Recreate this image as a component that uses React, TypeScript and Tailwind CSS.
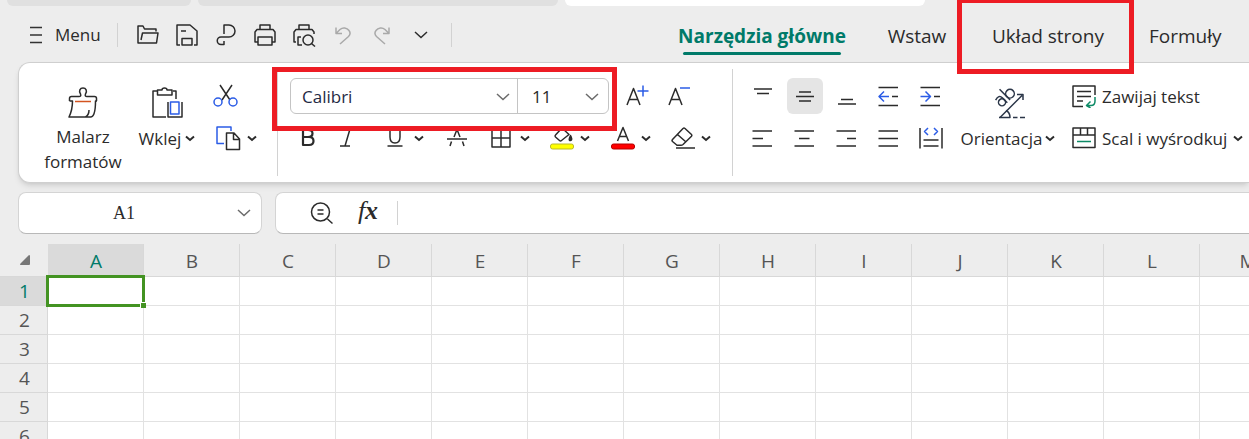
import type { ReactNode } from 'react';

const columns = ['A', 'B', 'C', 'D', 'E', 'F', 'G', 'H', 'I', 'J', 'K', 'L', 'M'];
const rows = [1, 2, 3, 4, 5, 6];

interface IconProps {
  children: ReactNode;
  size?: number;
  className?: string;
}

function Icon({ children, size = 24, className = '' }: IconProps) {
  return (
    <svg
      width={size}
      height={size}
      viewBox={`0 0 ${size} ${size}`}
      fill="none"
      stroke="currentColor"
      strokeWidth="1.5"
      strokeLinejoin="round"
      className={`shrink-0 ${className}`}
      aria-hidden="true"
    >
      {children}
    </svg>
  );
}

// Small bold arrow next to split buttons
function Caret() {
  return (
    <svg width="10" height="7" viewBox="0 0 10 7" fill="none" className="shrink-0" aria-hidden="true">
      <path d="M1 1.500l4 3.500 4-3.500" stroke="#2b2b2b" strokeWidth="2" />
    </svg>
  );
}

function Chevron({ className = '' }: { className?: string }) {
  return (
    <svg width="14" height="8" viewBox="0 0 14 8" fill="none" className={className} aria-hidden="true">
      <path d="M1 1l6 5.500L13 1" stroke="currentColor" strokeWidth="1.5" />
    </svg>
  );
}

interface ToolProps {
  label: string;
  children: ReactNode;
  className?: string;
}

function Tool({ label, children, className = 'w-9' }: ToolProps) {
  return (
    <button
      type="button"
      title={label}
      aria-label={label}
      className={`flex h-9 shrink-0 items-center justify-center rounded-md ${className}`}
    >
      {children}
    </button>
  );
}

function Divider({ className = '' }: { className?: string }) {
  return <div className={`w-px shrink-0 bg-[#d2d2d2] ${className}`} />;
}

function UndoIcon({ className = '' }: { className?: string }) {
  return (
    <Icon className={`text-[#a9a9a9] ${className}`}>
      <path d="M5 4.500v6h6M5 10.500l4-4a6 6 0 0 1 9 1c1.500 2 1 4.500-.5 6L9 21" />
    </Icon>
  );
}

function DocumentTabs() {
  return (
    <div className="flex h-1.5 shrink-0 gap-[7px] pl-[7px]">
      <div className="w-46 rounded-b-lg bg-[#e0e0e0]" />
      <div className="w-90 rounded-b-lg bg-[#e0e0e0]" />
      <div className="w-90 rounded-b-lg bg-white" />
    </div>
  );
}

function TopBar() {
  return (
    <header className="flex h-14 shrink-0 items-center pt-px">
      <button type="button" className="ml-[29px] flex w-[76px] items-center gap-3 text-[17px]">
        <svg width="14" height="18" viewBox="0 0 14 18" stroke="#333" strokeWidth="1.5" className="shrink-0" aria-hidden="true">
          <path d="M1 1.500h12M1 9h12M1 16.500h12" />
        </svg>
        Menu
      </button>
      <Divider className="ml-3 h-6" />
      <div className="ml-3 flex items-center gap-[3px]">
        <Tool label="Otwórz">
          <Icon>
            <path d="M20 8.500V6H8.500L7 3H2v17h18.500L22 10H6.500L5 17" />
          </Icon>
        </Tool>
        <Tool label="Zapisz">
          <Icon>
            <path d="M5 22H2V2h13l7 6v14h-3M7 22v-6.500h10V22zM6 8h5" />
          </Icon>
        </Tool>
        <Tool label="Eksportuj do PDF">
          <Icon>
            <path d="M10 11V2h5a6 6 0 0 1 0 12H7a3.700 3.700 0 0 0 0 7.500h3V18" />
          </Icon>
        </Tool>
        <Tool label="Drukuj">
          <Icon>
            <path d="M7 6.500V2h10v4.500M5 19H2V9l2-2.500h16L22 9v10h-3M5 14h14v8H5z" />
          </Icon>
        </Tool>
        <Tool label="Podgląd wydruku">
          <Icon>
            <path d="M7 6.500V2h10v4.500M4 19H2V9l2-2.500h16L22 9v2M9 14H6v8h4" />
            <circle cx="16" cy="17" r="5" />
            <path d="M19.500 20.500L23 23.500" />
          </Icon>
        </Tool>
        <Tool label="Cofnij">
          <UndoIcon />
        </Tool>
        <Tool label="Ponów">
          <UndoIcon className="-scale-x-100" />
        </Tool>
        <Tool label="Dostosuj pasek">
          <Chevron />
        </Tool>
      </div>
      <Divider className="ml-3 h-6" />
      <nav className="ml-[225px] flex items-center pt-[3px] text-[19px] whitespace-nowrap">
        <a href="#narzedzia" className="relative w-[170px] text-center font-bold text-[#007a69]">
          Narzędzia główne
          <span className="absolute inset-x-1.5 -bottom-[5px] h-[3px] rounded-full bg-[#007a69]" />
        </a>
        <a href="#wstaw" className="ml-10 w-[60px] text-center">
          Wstaw
        </a>
        <a href="#uklad" className="relative ml-[45px] w-[112px] text-center">
          Układ strony
          <span className="absolute -top-6 -right-[30px] -bottom-6 -left-[35px] z-10 border-5 border-[#ed1c24]" />
        </a>
        <a href="#formuly" className="ml-[45px] w-[72px] text-center">
          Formuły
        </a>
      </nav>
    </header>
  );
}

function ClipboardGroup() {
  return (
    <div className="flex pt-[15px] pl-5 text-[17px] leading-[25px]">
      <button type="button" className="flex w-22 flex-col items-center pt-2">
        <Icon size={34}>
          <path d="M3.500 15v-2.500q0-2 2-2H13q2.500 0 1.500-2.500c-2-3-.5-6 2.500-6s4.500 3 2.500 6q-1 2.500 1.500 2.500h7.500q2 0 2 2V15" />
          <path d="M3.500 15h3q0 9-3.500 16h21.500q5 0 5-16h1.500M23 24q0 5-3.500 7" />
          <path d="M9 15.500h16" stroke="#d35420" />
        </Icon>
        <span className="mt-1">Malarz</span>
        <span>formatów</span>
      </button>
      <button type="button" className="flex w-20 flex-col items-center pt-2">
        <Icon size={34}>
          <path d="M7 5H3v26h13M23 5h3v8M7.500 4h4.500q0-2 2.500-2t2.500 2h5v5h-14.500z" />
          <path d="M18 16v15h14V16" />
          <path d="M20.500 16h8.500v12h-8.500z" stroke="#2b5ce6" />
        </Icon>
        <span className="mt-1.5 flex items-center gap-1">
          Wklej
          <Caret />
        </span>
      </button>
      <div className="flex w-[58px] flex-col gap-1.5">
        <Tool label="Wytnij" className="w-[38px]">
          <Icon size={26}>
            <path d="M7 2l10 15M19 2L9 17" />
            <circle cx="5" cy="19" r="4" stroke="#2b5ce6" />
            <circle cx="20" cy="19" r="4" stroke="#2b5ce6" />
          </Icon>
        </Tool>
        <Tool label="Kopiuj" className="w-full gap-1.5">
          <Icon size={26}>
            <path d="M9 18.500H2V2h14v4" stroke="#2b5ce6" />
            <path d="M11.500 8H19l5.500 6v10.500h-13zM18.500 8v6.500h6" />
          </Icon>
          <Caret />
        </Tool>
      </div>
    </div>
  );
}

function FontGroup() {
  return (
    <div className="ml-3 flex w-[431px] shrink-0 flex-col gap-1.5 pt-[15px]">
      <div className="flex items-center">
        <div className="relative flex h-9 w-[319px] shrink-0 rounded-md border border-[#c4c4c4] bg-white text-[17px]">
          <label className="relative flex w-[227px] border-r border-[#c4c4c4]">
            <select aria-label="Czcionka" className="w-full appearance-none pt-0.5 pl-[11px] text-[#1f2a44]">
              <option>Calibri</option>
            </select>
            <Chevron className="pointer-events-none absolute top-3.5 right-[7px] text-[#6b6b6b]" />
          </label>
          <label className="relative flex flex-1">
            <select aria-label="Rozmiar czcionki" className="w-full appearance-none pt-0.5 pl-3.5">
              <option>11</option>
            </select>
            <Chevron className="pointer-events-none absolute top-3.5 right-[9px] text-[#6b6b6b]" />
          </label>
          <span className="pointer-events-none absolute -top-3 -right-[9px] -bottom-[18px] -left-[19px] z-10 border-5 border-[#ed1c24]" />
        </div>
        <Tool label="Zwiększ czcionkę" className="ml-2.5 w-9">
          <Icon>
            <path d="M2 21L8.500 4.500 15 21M4.500 15.500h8" />
            <path d="M12.500 7h11M18 1.500v11" stroke="#2b5ce6" />
          </Icon>
        </Tool>
        <Tool label="Zmniejsz czcionkę" className="ml-1.5 w-9">
          <Icon>
            <path d="M2 21L8.500 4.500 15 21M4.500 15.500h8" />
            <path d="M13 4h10" stroke="#2b5ce6" />
          </Icon>
        </Tool>
      </div>
      <div className="grid grid-cols-[36px_42px_66px_46px_59px_61px_61px_60px]">
        <Tool label="Pogrubienie" className="w-full">
          <Icon>
            <path d="M7 4v15h6q4.500 0 4.500-4t-4.500-4H7h5q4.500 0 4.500-3.500T12 4z" strokeWidth="2.2" />
          </Icon>
        </Tool>
        <Tool label="Kursywa" className="w-full">
          <Icon>
            <path d="M9 3h9M5 20h10M15 3L10 20" />
          </Icon>
        </Tool>
        <Tool label="Podkreślenie" className="w-full gap-2 pl-1.5">
          <Icon size={22}>
            <path d="M6 2v8q0 6 5 6t5-6V2M3.500 19h15" />
          </Icon>
          <Caret />
        </Tool>
        <Tool label="Przekreślenie" className="w-full">
          <Icon>
            <path d="M12 3.500L9 11M12 3.500l3 7.500M2 13h20M6.500 15.500L5 20M17.500 15.500l1.500 4.500" />
          </Icon>
        </Tool>
        <Tool label="Obramowania" className="w-full gap-2">
          <Icon size={22}>
            <path d="M2 2h18v18H2zM11 2v18M2 11h18" />
          </Icon>
          <Caret />
        </Tool>
        <Tool label="Kolor wypełnienia" className="w-full gap-1.5">
          <Icon>
            <path d="M12 2l7 6.500-7.500 6q-1 1-2 0L5.500 11q-1-1 0-2z" />
            <path d="M20.500 9.500q2.500 4.500 0 5t0-5z" fill="#333" />
            <rect x="0.500" y="18" width="23" height="5" rx="2" fill="#ff0" stroke="#b9b92a" strokeWidth="1" />
          </Icon>
          <Caret />
        </Tool>
        <Tool label="Kolor czcionki" className="w-full gap-1.5">
          <Icon>
            <path d="M6.500 15L12 1.500 17.500 15M8.500 10.500h7" />
            <rect x="0.500" y="18" width="23" height="5" rx="2" fill="#f00" stroke="#b40000" strokeWidth="1" />
          </Icon>
          <Caret />
        </Tool>
        <Tool label="Wyczyść" className="w-full gap-1.5">
          <Icon>
            <path d="M1.500 13.500L12 2.500q1-.8 2 0l6.500 6q.8.800 0 1.800L12 18.500q-1 .8-2 .8H6L1.500 15.500q-1-1 0-2zM6.500 8.500l8.500 7.500M5 22h19" />
          </Icon>
          <Caret />
        </Tool>
      </div>
    </div>
  );
}

function AlignmentGroup() {
  return (
    <div className="ml-3 grid shrink-0 grid-cols-5 content-start gap-1.5 pt-[15px]">
      <Tool label="Wyrównaj do góry">
        <Icon>
          <path d="M3 5h18M6 9.500h12" />
        </Icon>
      </Tool>
      <Tool label="Wyrównaj do środka" className="w-9 bg-[#e5e5e5]">
        <Icon>
          <path d="M6 8h12M3 12.500h18M6 17h12" />
        </Icon>
      </Tool>
      <Tool label="Wyrównaj do dołu">
        <Icon>
          <path d="M6 15.500h12M3 20h18" />
        </Icon>
      </Tool>
      <Tool label="Zmniejsz wcięcie">
        <Icon>
          <path d="M1.500 3.500H21M15 12.500h6M1.500 21.500H21" />
          <path d="M12 12.500H2M7 7.500l-5 5 5 5" stroke="#2b5ce6" />
        </Icon>
      </Tool>
      <Tool label="Zwiększ wcięcie">
        <Icon>
          <path d="M1.500 3.500H21M15 12.500h6M1.500 21.500H21" />
          <path d="M1.500 12.500h10M6.500 7.500l5 5-5 5" stroke="#2b5ce6" />
        </Icon>
      </Tool>
      <Tool label="Wyrównaj do lewej">
        <Icon>
          <path d="M1.500 5H21M1.500 12.500H12M1.500 20H21" />
        </Icon>
      </Tool>
      <Tool label="Wyśrodkuj">
        <Icon>
          <path d="M1.500 5H21M6 12.500h10.500M1.500 20H21" />
        </Icon>
      </Tool>
      <Tool label="Wyrównaj do prawej">
        <Icon>
          <path d="M1.500 5H21M12 12.500h9M1.500 20H21" />
        </Icon>
      </Tool>
      <Tool label="Wyjustuj">
        <Icon>
          <path d="M1.500 5H21M1.500 12.500H21M1.500 20H21" />
        </Icon>
      </Tool>
      <Tool label="Rozłóż">
        <Icon>
          <path d="M1 2v20.500M23 2v20.500M4.500 14h15M4.500 20h15" />
          <path d="M9 2L5.500 5.500 9 9M15 2l3.500 3.500L15 9" stroke="#2b5ce6" />
        </Icon>
      </Tool>
    </div>
  );
}

function LayoutGroup() {
  return (
    <div className="flex shrink-0 pt-[15px] pl-2 text-[17px] leading-[25px] whitespace-nowrap">
      <button type="button" className="flex w-[102px] flex-col items-center pt-2">
        <Icon size={34} className="text-[#2b3648]">
          {/* slanted "ab" */}
          <g transform="translate(11 22) rotate(-45)">
            <circle cx="4" cy="-4" r="3.5" />
            <path d="M1 -10q6.500-2 6.500 3V0" />
            <path d="M11.500 -15V0" />
            <circle cx="15.800" cy="-4.500" r="4.300" />
          </g>
          <path d="M9 31.500L31 9.500M26 8.500h6V14" />
          <path d="M8 31.500h11q0-5-4-7M22 31.500h4.500M29 31.500h5" />
        </Icon>
        <span className="mt-1.5 flex items-center gap-[3px]">
          Orientacja
          <Caret />
        </span>
      </button>
      <div className="ml-[13px] flex flex-col gap-1.5">
        <button type="button" className="flex h-9 items-center gap-1.5">
          <Icon>
            <path d="M11 22.500H1V2h22v9M5 7.500h14M5 12.500h14M5 17h6" />
            <path d="M23 13v4q0 4.500-4 4.500h-4M18.500 17.500l-4 4 4 2.500" stroke="#0d8a66" />
          </Icon>
          Zawijaj tekst
        </button>
        <button type="button" className="flex h-9 items-center gap-1.5">
          <Icon>
            <path d="M1 2h22v19.500H1zM1 9h22M8.500 2v7M15.500 2v7" />
            <path d="M5 15.500h14" stroke="#0d8a66" />
          </Icon>
          Scal i wyśrodkuj
          <Caret />
        </button>
      </div>
    </div>
  );
}

function Ribbon() {
  return (
    <section className="ml-[18px] flex shrink-0 rounded-l-xl border border-r-0 border-[#cfcfcf] bg-white shadow-md">
      <ClipboardGroup />
      <Divider className="my-1.5 ml-3 h-[107px]" />
      <FontGroup />
      <Divider className="my-1.5 ml-[11px]" />
      <AlignmentGroup />
      <LayoutGroup />
    </section>
  );
}

function FormulaBar() {
  return (
    <div className="mt-[9px] flex h-[42px] shrink-0 pl-[18px]">
      <div className="relative w-61 shrink-0 rounded-lg border border-[#d4d4d4] border-b-[#b8b8b8] bg-white">
        <input
          aria-label="Pole nazwy"
          defaultValue="A1"
          className="h-full w-full pr-8 text-center font-['Liberation_Serif',serif] text-lg outline-none"
        />
        <Chevron className="pointer-events-none absolute top-4 right-2.5 text-[#6b6b6b]" />
      </div>
      <div className="ml-[13px] flex flex-1 items-center rounded-l-lg border border-r-0 border-[#d4d4d4] border-b-[#b8b8b8] bg-white">
        <Tool label="Szukaj" className="ml-7 w-9">
          <Icon>
            <circle cx="10.500" cy="11" r="9" />
            <path d="M17.500 18l5 4.500M7.500 9h6M7.500 13h6" />
          </Icon>
        </Tool>
        <button
          type="button"
          className="ml-1.5 w-11 pb-1 text-center font-['Liberation_Serif',serif] text-[26px] leading-8 italic"
        >
          f<b>x</b>
        </button>
        <Divider className="ml-[7px] h-6" />
        <input aria-label="Formuła" className="h-full min-w-0 flex-1 px-3 outline-none" />
      </div>
    </div>
  );
}

function Sheet() {
  return (
    <div className="mt-2.5 min-h-0 flex-1 overflow-hidden bg-white">
      <table className="w-[1296px] table-fixed border-separate border-spacing-0 text-[19px] leading-7 text-[#555]">
        <thead>
          <tr className="h-[33px] bg-[#ededed]">
            <th className="w-12 border-b border-[#d8d8d8]">
              <svg width="10" height="10" viewBox="0 0 10 10" className="ml-5" aria-hidden="true">
                <path d="M9 0q1 0 1 1v8q0 1-1 1H1Q-.5 10 .5 8.500z" fill="#777" />
              </svg>
            </th>
            {columns.map((col) => (
              <th
                key={col}
                scope="col"
                className={`w-24 border-r border-b border-[#d8d8d8] p-0 pt-0.5 pl-px font-normal ${
                  col === 'A' ? 'bg-[#dadada] text-[#007a69]' : ''
                }`}
              >
                {col}
              </th>
            ))}
          </tr>
        </thead>
        <tbody>
          {rows.map((row) => (
            <tr key={row} className="h-[29px]">
              <th
                scope="row"
                className={`border-r border-b border-[#d8d8d8] p-0 pl-0.5 font-normal ${
                  row === 1 ? 'bg-[#dadada] text-[#007a69]' : 'bg-[#ededed]'
                }`}
              >
                {row}
              </th>
              {columns.map((col) => (
                <td key={col} className="relative border-r border-b border-[#e2e2e2] p-0">
                  {row === 1 && col === 'A' && (
                    <div className="absolute -inset-0.5 z-10 border-3 border-[#439322]">
                      <span className="absolute -right-1 -bottom-1 size-1.5 border-t border-l border-white bg-[#439322]" />
                    </div>
                  )}
                </td>
              ))}
            </tr>
          ))}
        </tbody>
      </table>
    </div>
  );
}

export default function App() {
  return (
    <div className="flex h-screen flex-col overflow-hidden bg-[#ededed] font-['Open_Sans','Noto_Sans',sans-serif] text-[#2b2b2b]">
      <DocumentTabs />
      <TopBar />
      <Ribbon />
      <FormulaBar />
      <Sheet />
    </div>
  );
}
